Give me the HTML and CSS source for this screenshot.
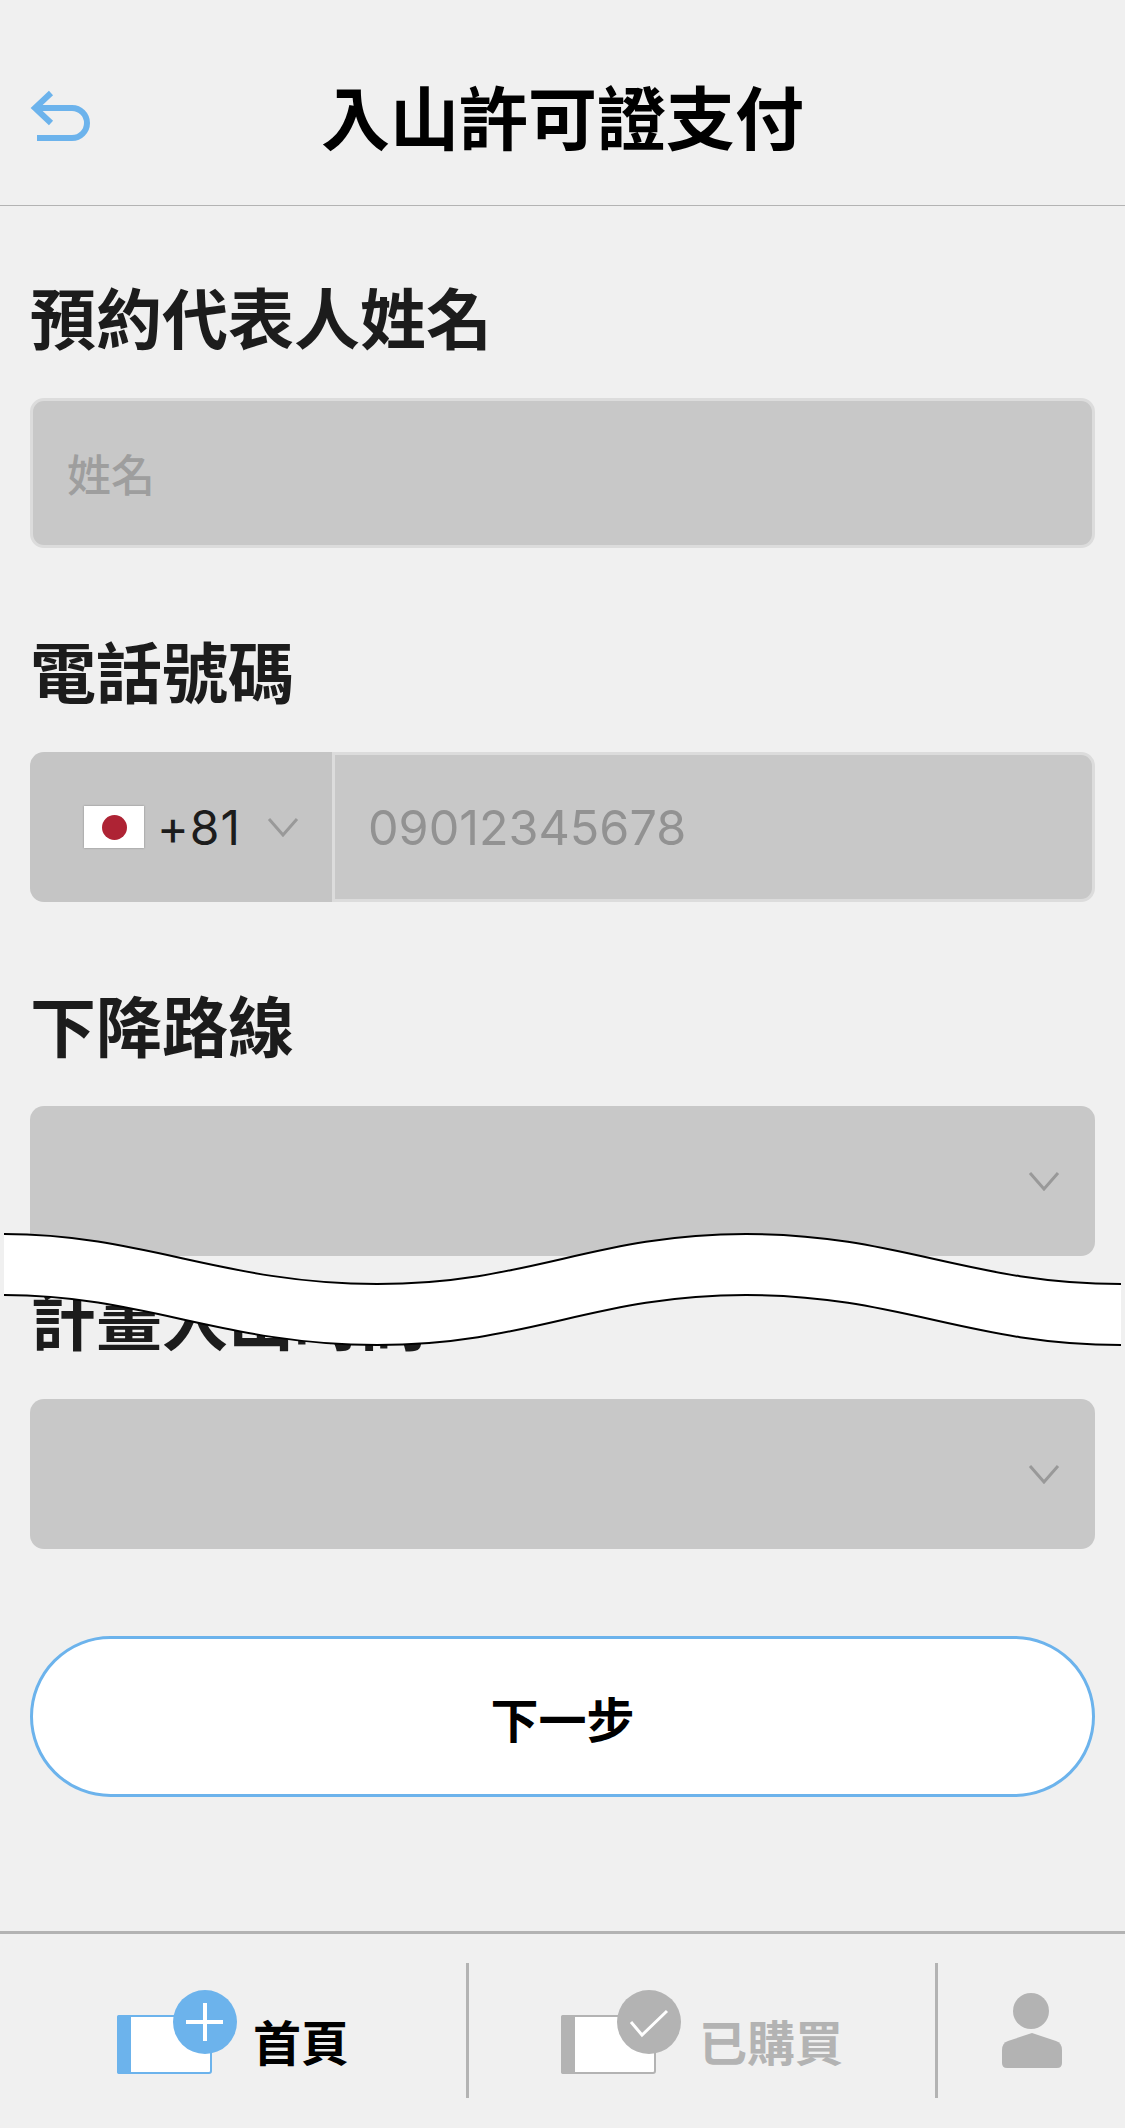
FILE: index.html
```html
<!DOCTYPE html>
<html lang="zh-Hant">
<head>
    <meta charset="UTF-8">
    <title>入山許可證支付</title>
    <link rel="stylesheet" href="styles.css">
</head>
<body>
<div class="page">
    <header class="topbar">
        <svg class="back" width="64" height="56" viewBox="0 0 64 56">
            <path d="M22 3 L6 18 L22 33 M6 18 H43 A15 15 0 0 1 43 48 H8" fill="none" stroke="#6cb3ec" stroke-width="6"/>
        </svg>
        <h1>入山許可證支付</h1>
    </header>

    <main class="content">
        <section class="field">
            <label>預約代表人姓名</label>
            <div class="box box-line"><span class="hint hint-name">姓名</span></div>
        </section>

        <section class="field">
            <label>電話號碼</label>
            <div class="phone">
                <div class="country">
                    <span class="flag"><i></i></span>
                    <span class="code">+81</span>
                    <svg class="chev chev-small" width="32" height="20" viewBox="0 0 32 20"><path d="M2 2 L16 18 L30 2" fill="none" stroke="#999" stroke-width="3"/></svg>
                </div>
                <div class="number"><span class="hint">09012345678</span></div>
            </div>
        </section>

        <section class="field">
            <label>下降路線</label>
            <div class="box box-select">
                <svg class="chev" width="32" height="20" viewBox="0 0 32 20"><path d="M2 2 L16 18 L30 2" fill="none" stroke="#999" stroke-width="3"/></svg>
            </div>
        </section>

        <section class="field field-date">
            <label>計畫入山時間</label>
            <div class="box box-select">
                <svg class="chev" width="32" height="20" viewBox="0 0 32 20"><path d="M2 2 L16 18 L30 2" fill="none" stroke="#999" stroke-width="3"/></svg>
            </div>
        </section>

        <button class="next" type="button">下一步</button>
    </main>

    <footer class="tabs">
        <div class="tab tab-home">
            <svg width="120" height="86" viewBox="0 0 120 86">
                <rect x="1" y="26" width="93" height="57" rx="2" fill="#fff" stroke="#6cb3ec" stroke-width="2"/>
                <path d="M0 27 Q0 25 2 25 H14 V84 H2 Q0 84 0 82 Z" fill="#6cb3ec"/>
                <circle cx="88" cy="32" r="32" fill="#6cb3ec"/>
                <path d="M69 32 H106 M88 13 V51" stroke="#fff" stroke-width="4"/>
            </svg>
            <span>首頁</span>
        </div>
        <div class="tab tab-bought">
            <svg width="120" height="86" viewBox="0 0 120 86">
                <rect x="1" y="26" width="93" height="57" rx="2" fill="#fff" stroke="#b3b3b3" stroke-width="2"/>
                <path d="M0 27 Q0 25 2 25 H14 V84 H2 Q0 84 0 82 Z" fill="#b3b3b3"/>
                <circle cx="88" cy="32" r="32" fill="#b3b3b3"/>
                <path d="M70 32 L81 45 L106 21" fill="none" stroke="#fff" stroke-width="3"/>
            </svg>
            <span>已購買</span>
        </div>
        <div class="tab tab-me">
            <svg width="62" height="80" viewBox="0 0 62 80">
                <circle cx="30" cy="21" r="18" fill="#b3b3b3"/>
                <path d="M31 43 L55 51 Q61 53 61 60 V73 Q61 78 56 78 H6 Q1 78 1 73 V60 Q1 53 7 51 Z" fill="#b3b3b3"/>
            </svg>
        </div>
    </footer>

    <!-- the torn strip over the form -->
    <svg class="wave" width="1117" height="114" viewBox="0 0 1117 114">
        <path d="M0 1 C140 1 220 51 373 51 C526 51 590 1 742 1 C895 1 965 51 1117 51 V112 C965 112 895 62 742 62 C590 62 526 112 373 112 C220 112 140 62 0 62 Z" fill="#fff"/>
        <path d="M0 1 C140 1 220 51 373 51 C526 51 590 1 742 1 C895 1 965 51 1117 51" fill="none" stroke="#000" stroke-width="2"/>
        <path d="M0 62 C140 62 220 112 373 112 C526 112 590 62 742 62 C895 62 965 112 1117 112" fill="none" stroke="#000" stroke-width="2"/>
    </svg>
</div>
</body>
</html>
```
FILE: styles.css
```css
body {
    margin: 0;
    background-color: #f0f0f0;
    font-family: "Noto Sans CJK TC", "Noto Sans", sans-serif;
    color: #1c1c1c;
}
.page {
    position: relative;
    width: 1125px;
    height: 2128px;
    overflow: hidden;
    display: flex;
    flex-direction: column;
}
.topbar {
    height: 206px;
    box-sizing: border-box;
    padding-top: 25px;
    border-bottom: 1px solid #b3b3b3;
    display: flex;
    align-items: center;
    justify-content: center;
    position: relative;
}
.topbar h1 {
    margin: 0;
    font-size: 69px;
    font-weight: 700;
    color: #000;
}
.back {
    position: absolute;
    left: 29px;
    top: 90px;
}
.content {
    flex: 1;
    padding: 0 30px;
}
.field {
    padding-top: 87px;
}
.field:first-child {
    padding-top: 75px;
}
.field label {
    display: block;
    font-size: 66px;
    font-weight: 700;
    line-height: 68px;
    height: 117px;
}
.field-date {
    padding-top: 26px;
}
.box {
    height: 150px;
    box-sizing: border-box;
    background-color: #c8c8c8;
    border-radius: 14px;
    display: flex;
    align-items: center;
}
.box-line {
    border: 3px solid #dcdcdc;
    padding-left: 34px;
}
.box-select {
    justify-content: flex-end;
    padding-right: 35px;
}
.hint {
    font-family: "Inter", "Noto Sans CJK TC", sans-serif;
    font-size: 48.500px;
    color: #929292;
}
.hint-name {
    font-family: "Noto Sans CJK TC", sans-serif;
    font-size: 44px;
    font-weight: 500;
    color: #9e9e9e;
}
.phone {
    height: 150px;
    display: flex;
}
.country {
    width: 302px;
    background-color: #c5c5c5;
    border-radius: 14px 0 0 14px;
    display: flex;
    align-items: center;
    padding-left: 54px;
    box-sizing: border-box;
}
.flag {
    width: 60px;
    height: 42px;
    background-color: #fff;
    box-shadow: 0 0 2px #888;
    display: flex;
    align-items: center;
    justify-content: center;
}
.flag i {
    width: 25px;
    height: 25px;
    border-radius: 50%;
    background-color: #ae2334;
}
.code {
    font-family: "Inter", sans-serif;
    font-size: 48px;
    letter-spacing: 1px;
    margin-left: 13px;
}
.chev-small {
    margin-left: 26px;
}
.number {
    flex: 1;
    box-sizing: border-box;
    background-color: #c8c8c8;
    border: 3px solid #dcdcdc;
    border-radius: 0 14px 14px 0;
    display: flex;
    align-items: center;
    padding-left: 33px;
}
.next {
    display: block;
    width: 100%;
    height: 161px;
    margin-top: 87px;
    background-color: #fff;
    border: 3px solid #6cb3ec;
    border-radius: 81px;
    font-family: inherit;
    font-size: 48px;
    font-weight: 700;
    color: #000;
}
.tabs {
    height: 197px;
    box-sizing: border-box;
    border-top: 3px solid #b3b3b3;
    padding-top: 29px;
    display: flex;
    align-items: flex-start;
}
.tab {
    height: 135px;
    box-sizing: border-box;
    display: flex;
    align-items: center;
    font-size: 48px;
    font-weight: 700;
}
.tab svg {
    align-self: flex-start;
    margin-top: 27px;
}
.tab span {
    margin-top: 18px;
}
.tab-home {
    width: 469px;
    border-right: 3px solid #b3b3b3;
    padding-left: 117px;
    color: #000;
}
.tab-home span {
    margin-left: 16px;
}
.tab-bought {
    width: 469px;
    border-right: 3px solid #b3b3b3;
    padding-left: 92px;
    color: #b3b3b3;
}
.tab-bought span {
    margin-left: 18px;
}
.tab-me {
    flex: 1;
    justify-content: center;
}
.wave {
    position: absolute;
    left: 4px;
    top: 1233px;
}
```
